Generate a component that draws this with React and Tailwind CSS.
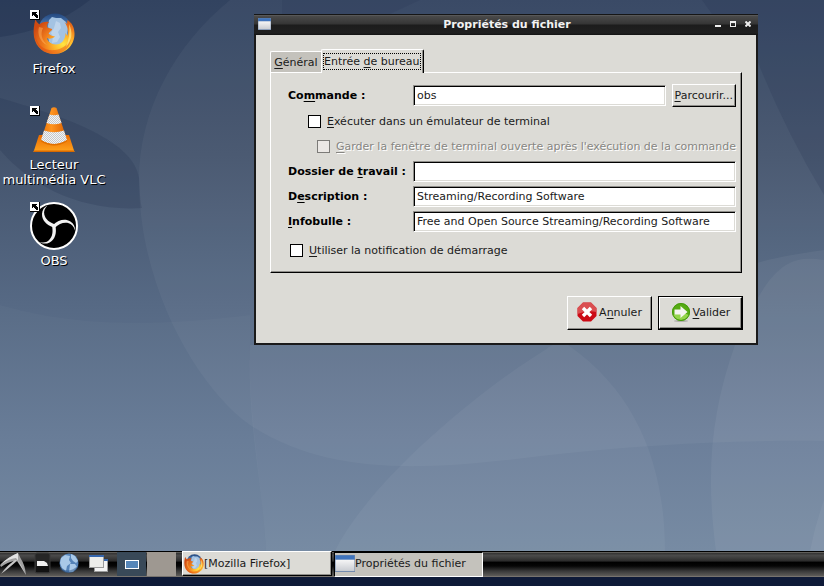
import React from "react";

function Wallpaper() {
  return (
    <svg
      className="absolute inset-0 -z-10 h-full w-full"
      viewBox="0 0 824 551"
      preserveAspectRatio="none"
      aria-hidden="true"
    >
      <defs>
        <linearGradient id="sky" x1="0" y1="0" x2="0" y2="1">
          <stop offset="0" stopColor="#324360" />
          <stop offset="0.28" stopColor="#44546d" />
          <stop offset="0.55" stopColor="#566984" />
          <stop offset="0.8" stopColor="#667a96" />
          <stop offset="1" stopColor="#71869f" />
        </linearGradient>
      </defs>
      <rect width="824" height="551" fill="url(#sky)" />
      <path d="M0 0H90Q52 30 0 37Z" fill="#1d2b4a" opacity="0.32" />
      <path d="M0 98C55 114 134 138 139 178C140 194 140 202 142 208C80 212 30 185 0 150Z" fill="#1d2b4a" opacity="0.2" />
      <path d="M230 0C175 45 139 110 139 180C139 290 200 390 250 425C330 478 430 470 550 455C640 445 730 440 824 441V0Z" fill="#ffffff" opacity="0.04" />
      <path d="M0 305C60 322 130 330 250 315V345C248 410 262 480 266 551H0Z" fill="#ffffff" opacity="0.025" />
      <path d="M250 345C247 420 262 480 266 551H824V260C790 255 770 262 735 345Z" fill="#ffffff" opacity="0.045" />
      <path d="M335 551C370 480 480 390 545 350Q555 341 568 345C640 395 665 470 665 551Z" fill="#ffffff" opacity="0.045" />
      <path d="M735 345C712 410 705 470 716 551H824V250Q780 256 757 263Z" fill="#ffffff" opacity="0.05" />
      <path d="M282 0V14H390L420 0Z" fill="#1d2b4a" opacity="0.12" />
      <path d="M702 0L712 14H757V60Q785 130 824 195V0Z" fill="#1d2b4a" opacity="0.16" />
      <path d="M824 500Q815 525 810 551H824Z" fill="#ffffff" opacity="0.05" />
    </svg>
  );
}

function FirefoxIcon({ className, id }) {
  return (
    <svg className={className} viewBox="3 3 42 42" aria-hidden="true">
      <defs>
        <radialGradient id={id + "fox"} cx="0.72" cy="0.72" r="0.8">
          <stop offset="0" stopColor="#ffe642" />
          <stop offset="0.3" stopColor="#ffb52b" />
          <stop offset="0.6" stopColor="#ee7a1c" />
          <stop offset="1" stopColor="#cf4a12" />
        </radialGradient>
        <linearGradient id={id + "globe"} x1="0" y1="0" x2="0" y2="1">
          <stop offset="0" stopColor="#23477e" />
          <stop offset="0.5" stopColor="#5b8fc9" />
          <stop offset="1" stopColor="#2b5fa5" />
        </linearGradient>
      </defs>
      <circle cx="25" cy="20" r="16.5" fill={"url(#" + id + "globe)"} />
      <path d="M19 10l3-3 4 1 5 0 5 4 2 6-1 5 1 4-3 6-6 4-6-1-4-4-1-6 1-5-1-5z" fill="#a4c3e2" />
      <path d="M26 11l4 2 1 5-3 4 2 5-3 5-5 1 1-6-2-4 3-5z" fill="#c9dcef" opacity="0.7" />
      <path
        d="M5.500 9C4 15 3 20 4 27C6 38 15 44.500 25 44C37 43.500 45 34 44.500 23C44.200 17 42 13 37.500 10L37 14L34.500 12C38 17 38.500 22 37.500 26L35.500 23C35.500 30 31 34.500 26 34.500C21 34.500 17.500 31.500 17 28C19.500 29.500 23 28.500 25 26.500C22 26 20 25 18.500 23.500C20 21.500 22.500 20.500 22 19L17.500 17.500C16.500 15.500 17.500 13.500 19 12C14 11.500 11.500 12.500 9.500 14.500C7.500 13 6 11 5.500 9Z"
        fill={"url(#" + id + "fox)"}
      />
      <path d="M5 25C7 36 15 41 25 40C33 39 39 34 41 27C41 37 34 43.500 25 44C15 44 6 38 5 25Z" fill="#e03c0c" opacity="0.4" />
      <path d="M9 17C7 24 10 32 17 35C12 30 10 24 13 18Z" fill="#ffb35c" opacity="0.5" />
      <path d="M39 14C43 22 42 31 36 37C39 30 40 22 39 14Z" fill="#fff08a" opacity="0.7" />
    </svg>
  );
}

function VlcIcon() {
  return (
    <svg className="size-12" viewBox="0 0 48 48" aria-hidden="true">
      <defs>
        <linearGradient id="cone" x1="0" y1="0" x2="1" y2="0">
          <stop offset="0" stopColor="#ea7000" />
          <stop offset="0.4" stopColor="#ff9420" />
          <stop offset="1" stopColor="#d95f00" />
        </linearGradient>
        <linearGradient id="base" x1="0" y1="0" x2="0" y2="1">
          <stop offset="0" stopColor="#ea6a00" />
          <stop offset="1" stopColor="#ffa51e" />
        </linearGradient>
        <pattern id="mesh" width="2" height="2" patternUnits="userSpaceOnUse">
          <rect width="2" height="2" fill="#f4f4f4" />
          <rect width="1" height="1" fill="#c6c8cc" />
          <rect x="1" y="1" width="1" height="1" fill="#c6c8cc" />
        </pattern>
      </defs>
      <path d="M9 29H39L44.500 46H3.500Z" fill="url(#base)" />
      <path d="M3.500 46L4 44.500H44L44.500 46Z" fill="#d96a00" />
      <path d="M21.500 2Q24 0.500 26.500 2L37 34Q24 43 11 34Z" fill="url(#cone)" />
      <path d="M19.500 8.500Q24 10 28.500 8.500L31.500 17Q24 19.500 16.500 17Z" fill="url(#mesh)" />
      <path d="M14 24.500Q24 28 34 24.500L37 34Q24 42 11 34Z" fill="url(#mesh)" />
      <path d="M11 34Q24 42 37 34V35.500Q24 43.500 11 35.500Z" fill="#e07000" />
    </svg>
  );
}

function ObsIcon() {
  const blade = "M24 25.500C16 23 11.800 18 12 12C12.200 8 14.200 5 17.500 3.500C14.500 6.500 13.600 9.500 14.300 12.500C15.500 17.500 19.500 20.500 25.500 22.500Z";
  return (
    <svg className="size-12" viewBox="0 0 48 48" aria-hidden="true">
      <circle cx="24" cy="24" r="23" fill="#000" stroke="#fff" strokeWidth="2" />
      <g fill="#f2f2f2">
        <path d={blade} />
        <path d={blade} transform="rotate(120 24 24)" />
        <path d={blade} transform="rotate(240 24 24)" />
      </g>
    </svg>
  );
}

function LinkEmblem() {
  return (
    <svg className="absolute top-0 left-0 size-[10px]" viewBox="0 0 10 10" shapeRendering="crispEdges" aria-hidden="true">
      <rect width="10" height="10" fill="#000" />
      <rect width="9" height="9" fill="#fff" />
      <path d="M2 2h5v1h-1v1h1v1h1v3h-2v-1h-1v-1h-1v-1h-1v1h-1z" fill="#000" />
    </svg>
  );
}

function WindowIcon({ className }) {
  return (
    <svg className={className} viewBox="0 0 18 18" preserveAspectRatio="none" aria-hidden="true">
      <defs>
        <linearGradient id="pane" x1="0" y1="0" x2="0" y2="1">
          <stop offset="0" stopColor="#f6f6f6" />
          <stop offset="1" stopColor="#c9ccd2" />
        </linearGradient>
      </defs>
      <rect width="18" height="18" fill="#6f88ad" />
      <rect x="0.500" y="0.500" width="17" height="4.500" fill="#3f74bd" />
      <rect x="0.500" y="5" width="17" height="12" fill="url(#pane)" />
    </svg>
  );
}

function CancelIcon() {
  return (
    <svg className="size-5 shrink-0" viewBox="0 0 20 20" aria-hidden="true">
      <path d="M6 .5H14L19.500 6V14L14 19.500H6L.5 14V6Z" fill="#cc0a14" />
      <path d="M6 .5H14L19.500 6V10Q10 8 .5 12V6Z" fill="#dd6060" opacity="0.8" />
      <path d="M6 6L14 14M14 6L6 14" stroke="#fff" strokeWidth="3.400" />
    </svg>
  );
}

function OkIcon() {
  return (
    <svg className="size-5 shrink-0" viewBox="0 0 20 20" aria-hidden="true">
      <ellipse cx="10" cy="19" rx="7" ry="1" fill="#000" opacity="0.2" />
      <circle cx="10" cy="10" r="9" fill="#56ab12" />
      <path d="M2 13A9 9 0 0 0 18 13Q10 9 2 13Z" fill="#a4e05a" opacity="0.8" />
      <circle cx="10" cy="10" r="8.500" fill="none" stroke="#449a0c" />
      <path d="M3.500 7.500H9.500V4L16.500 10L9.500 16V12.500H3.500Z" fill="#f4f4f0" />
    </svg>
  );
}

function LauncherIcons() {
  return (
    <>
      <button aria-label="Menu" className="h-6 w-7">
        <svg className="size-full" viewBox="0 0 28 24" aria-hidden="true">
          <path d="M18 1Q8 5 0 13L1 15Q8 10 14 9Q7 13 1 22Q10 15 17 9L26 23Q25 13 21 7Z" fill="#a2a2a2" />
          <path d="M18 1Q8 5 0 13Q8 7 16 6Q19 9 26 23L18 9Z" fill="#e2e2e2" />
          <path d="M15 8Q7 14 2 21Q8 17 17 8Z" fill="#c8c8c8" />
        </svg>
      </button>
      <button aria-label="Gestionnaire de fichiers" className="h-6 w-7">
        <svg className="size-full" viewBox="0 0 28 24" aria-hidden="true">
          <rect x="7" y="1" width="15" height="20" rx="2" fill="#262626" stroke="#3a3a3a" />
          <rect x="8" y="14" width="13" height="6" fill="#121212" />
          <path d="M9 9H16L19 11L20 14H9Z" fill="#f2f2f2" />
        </svg>
      </button>
      <button aria-label="Navigateur" className="h-6 w-7">
        <svg className="size-full" viewBox="0 0 28 24" aria-hidden="true">
          <circle cx="13" cy="11" r="9.500" fill="#5583b8" />
          <path d="M5 6l4-3 5 1-1 4 2 3-4 3-1 5-4-3-2-5zM15 2l4 2 3 5-2 2-3-2-2-3zM14 12l5 0 2 3-4 5-4 0z" fill="#a9c9e8" />
          <path d="M3 15Q12 23 23 13Q20 21 13 21Q6 21 3 15Z" fill="#2d5688" opacity="0.5" />
        </svg>
      </button>
      <button aria-label="Réduire toutes les fenêtres" className="h-6 w-8">
        <svg className="size-full" viewBox="0 0 32 24" aria-hidden="true">
          <rect x="10.500" y="7.500" width="13" height="12" fill="#f3f3f3" stroke="#9b9b9b" />
          <rect x="10" y="7" width="14" height="2" fill="#3566ad" />
          <rect x="5.500" y="3.500" width="14" height="12" fill="#ededea" stroke="#9b9b9b" />
          <rect x="5" y="3" width="15" height="2" fill="#3566ad" />
        </svg>
      </button>
    </>
  );
}

const desktopItems = [
  { label: "Firefox", icon: <FirefoxIcon id="desk" className="size-12 p-[3px]" /> },
  { label: "Lecteur multimédia VLC", icon: <VlcIcon /> },
  { label: "OBS", icon: <ObsIcon /> },
];

function Key({ children }) {
  return <u className="underline decoration-1 underline-offset-2">{children}</u>;
}

const field =
  "h-[21px] w-full min-w-0 border border-t-[#8f8e8a] border-l-[#8f8e8a] border-r-white border-b-white bg-white px-[3px] text-[11px] text-[#1a1a1a] shadow-[inset_1px_1px_0_#000,inset_-1px_-1px_0_#dcdbd6] outline-none";

const raised =
  "border border-t-white border-l-white border-r-black border-b-black bg-[#dcdbd6] shadow-[inset_-1px_-1px_0_#8f8e8a]";

const box =
  "size-[13px] shrink-0 appearance-none border border-black bg-white disabled:border-[#7c7b78] disabled:bg-[#ebe8e5]";

function Field({ id, label, value, className, children }) {
  return (
    <div className={"flex items-center " + className}>
      <label htmlFor={id} className="w-[125px] shrink-0 font-bold text-black">
        {label}
      </label>
      <div className="flex min-w-0 flex-1 items-center gap-1.5">
        <input id={id} type="text" defaultValue={value} className={field} />
        {children}
      </div>
    </div>
  );
}

function Check({ id, className, disabled, children }) {
  return (
    <div className={"flex h-[13px] items-center gap-1.5 " + className}>
      <input id={id} type="checkbox" disabled={disabled} className={box} />
      <label htmlFor={id} className={disabled ? "whitespace-nowrap text-[#878682] [text-shadow:1px_1px_0_#fff]" : "whitespace-nowrap"}>
        {children}
      </label>
    </div>
  );
}

function PropertiesWindow() {
  return (
    <section
      aria-label="Propriétés du fichier"
      className="absolute top-[14px] left-[254px] w-[504px] border-2 border-t-0 border-[#1a1a1a] bg-[#dcdbd6] text-[11px] leading-[13px] text-[#1a1a1a]"
    >
      <header className="-mx-0.5 flex h-[21px] items-center border-t border-[#161616] bg-[linear-gradient(#666_0,#4a4a4a_1px,#353535_45%,#1c1c1c_50%,#202020_90%,#121212_100%)] pr-[7px] pb-0.5 pl-1">
        <WindowIcon className="h-3 w-[13px]" />
        <h1 className="ml-7 flex-1 text-center font-bold text-[#f2f2f2]">Propriétés du fichier</h1>
        <div className="flex gap-[9px]">
          <button aria-label="Réduire" className="size-1.5">
            <svg className="size-full" viewBox="0 0 6 6" shapeRendering="crispEdges"><path d="M0 4h6v2H0z" fill="#eee" /></svg>
          </button>
          <button aria-label="Agrandir" className="size-1.5">
            <svg className="size-full" viewBox="0 0 6 6" shapeRendering="crispEdges"><path d="M0 0h6v6H0zM1 2v3h4V2z" fillRule="evenodd" fill="#eee" /></svg>
          </button>
          <button aria-label="Fermer" className="size-1.5">
            <svg className="size-full" viewBox="0 0 6 6"><path d="M.5.5l5 5M5.500.5l-5 5" stroke="#eee" strokeWidth="2" /></svg>
          </button>
        </div>
      </header>

      <div className="px-3.5 pt-3.5 pb-[13px]">
        <div role="tablist" className="relative z-10 -mb-px flex items-end">
          <button
            role="tab"
            aria-selected="false"
            className="mb-px h-[21px] w-[51px] rounded-tl-[2px] border-t border-l border-white bg-[#c4c2bc] text-center"
          >
            <Key>G</Key>énéral
          </button>
          <button
            role="tab"
            aria-selected="true"
            className="h-6 rounded-t-[2px] border-t border-r border-l border-t-white border-r-black border-l-white bg-[#dcdbd6] py-[3px] pr-0.5 pl-px shadow-[inset_-1px_0_0_#8f8e8a]"
          >
            <span className="block h-[17px] border border-dotted border-black leading-[15px]">
              Entrée <Key>d</Key>e bureau
            </span>
          </button>
        </div>

        <form className={"pt-[11px] pr-[5px] pb-[15px] pl-[17px] " + raised}>
          <Field id="command" label={<>Co<Key>m</Key>mande :</>} value="obs" className="h-[23px]">
            <button type="button" className={"h-[23px] shrink-0 px-0.5 " + raised}>
              <Key>P</Key>arcourir...
            </button>
          </Field>
          <Check id="terminal" className="mt-2 ml-5">
            <Key>E</Key>xécuter dans un émulateur de terminal
          </Check>
          <Check id="keep" className="mt-3 ml-[29px]" disabled>
            <Key>G</Key>arder la fenêtre de terminal ouverte après l'exécution de la commande
          </Check>
          <Field id="folder" label={<>Dossier de <Key>t</Key>ravail :</>} value="" className="mt-2" />
          <Field id="description" label={<>D<Key>e</Key>scription :</>} value="Streaming/Recording Software" className="mt-1" />
          <Field id="tooltip" label={<><Key>I</Key>nfobulle :</>} value="Free and Open Source Streaming/Recording Software" className="mt-1" />
          <Check id="notify" className="mt-3 ml-0.5">
            <Key>U</Key>tiliser la notification de démarrage
          </Check>
        </form>

        <footer className="-mr-px mt-[23px] flex justify-end gap-1.5">
          <button className={"flex h-[34px] w-[85px] items-center justify-center gap-0.5 pb-0.5 " + raised}>
            <CancelIcon />
            <span>A<Key>n</Key>nuler</span>
          </button>
          <button className="h-[34px] w-[85px] border border-black">
            <span className={"flex h-full items-center justify-center gap-0.5 pb-0.5 " + raised}>
              <OkIcon />
              <span><Key>V</Key>alider</span>
            </span>
          </button>
        </footer>
      </div>
    </section>
  );
}

function Taskbar() {
  return (
    <nav
      aria-label="Barre des tâches"
      className="flex h-[26px] border-t border-b border-t-black border-b-[#77736e] bg-[linear-gradient(#8d8982_0,#333_1px,#4a4a4a_15%,#2a2a2a_38%,#000_42%,#060606_58%,#3a3a3a_80%,#5e5c59_100%)] text-[11px] leading-[13px] text-[#1a1a1a]"
    >
      <LauncherIcons />
      <div className="ml-px flex gap-px">
        <button aria-label="Bureau 1" className="flex w-[29px] items-center justify-center bg-[#394958]">
          <span className="h-[9px] w-3.5 border border-white bg-[#5686b8]" />
        </button>
        <button aria-label="Bureau 2" className="w-[29px] bg-[#9e9891]" />
      </div>
      <button className={"-mt-px ml-1.5 flex w-[150px] items-center pl-px " + raised}>
        <FirefoxIcon id="task" className="size-5" />
        <span>[Mozilla Firefox]</span>
      </button>
      <button className="-mb-px ml-0.5 flex w-[149px] items-center border border-t-black border-l-black border-r-white border-b-white bg-[#c4c2bc] pb-0.5">
        <WindowIcon className="h-[17px] w-5" />
        <span>Propriétés du fichier</span>
      </button>
    </nav>
  );
}

export default function App() {
  return (
    <div className="flex min-h-screen flex-col bg-[#0e1a38] font-['DejaVu_Sans',sans-serif]">
      <main className="relative isolate flex-1 overflow-hidden">
        <Wallpaper />
        <ul className="flex w-[108px] flex-col pt-2.5">
          {desktopItems.map((item) => (
            <li key={item.label} className="h-24">
              <a
                href="#"
                className="flex flex-col items-center gap-[3px] text-center text-[13px] leading-[15px] text-white [text-shadow:1px_1px_0_#000]"
              >
                <span className="relative block size-12">
                  {item.icon}
                  <LinkEmblem />
                </span>
                <span>{item.label}</span>
              </a>
            </li>
          ))}
        </ul>
        <PropertiesWindow />
      </main>
      <Taskbar />
      <div className="h-[9px]" />
    </div>
  );
}
